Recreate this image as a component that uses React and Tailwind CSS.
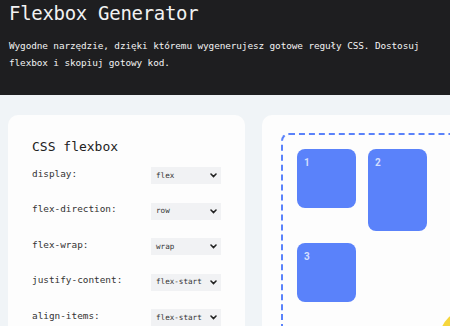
const mono = { fontFamily: '"DejaVu Sans Mono", "Liberation Mono", monospace' };

const rows = [
  { label: 'display:', value: 'flex' },
  { label: 'flex-direction:', value: 'row' },
  { label: 'flex-wrap:', value: 'wrap' },
  { label: 'justify-content:', value: 'flex-start' },
  { label: 'align-items:', value: 'flex-start' },
];

const items = [
  { n: 1, h: 'h-[59px]' },
  { n: 2, h: 'h-[82px]' },
  { n: 3, h: 'h-[59px]' },
];

function Chevron() {
  return (
    <svg width="7" height="5" viewBox="0 0 7 5" className="shrink-0">
      <path d="M1 1l2.5 2.5L6 1" fill="none" stroke="#222" strokeWidth="1.6" strokeLinecap="round" />
    </svg>
  );
}

export default function App() {
  return (
    <div className="relative w-[450px] h-[326px] overflow-hidden bg-[#f0f4f7]" style={mono}>
      <header className="bg-[#1e1e20] px-[9px] pb-[24px] text-[#f2f2f2]">
        <h1 className="text-[19px] leading-[26px] tracking-[-0.3px]">Flexbox Generator</h1>
        <p className="mt-[11px] text-[9.4px] leading-[17px] tracking-[-0.1px] w-[440px]">
          Wygodne narzędzie, dzięki któremu wygenerujesz gotowe reguły CSS. Dostosuj flexbox i skopiuj gotowy kod.
        </p>
      </header>

      <main className="flex gap-[17px] pl-[8px] pt-[20px]">
        <section className="w-[237px] shrink-0 h-[260px] rounded-[10px] bg-[#fdfdfd] p-6 pt-[23px]">
          <h2 className="text-[13px] leading-[18px] text-[#222] mb-[11px]">CSS flexbox</h2>
          <div className="flex flex-col gap-[18.5px]">
            {rows.map((r) => (
              <div key={r.label} className="flex items-center justify-between h-[17px]">
                <span className="text-[9.4px] text-[#333] -mt-[3px]">{r.label}</span>
                <div className="flex items-center justify-between w-[70px] h-[17px] bg-[#f1f2f4] pl-[5px] pr-[4px]">
                  <span className="text-[7.6px] text-[#333]">{r.value}</span>
                  <Chevron />
                </div>
              </div>
            ))}
          </div>
        </section>

        <section className="w-[237px] shrink-0 h-[260px] rounded-[10px] bg-[#fdfdfd] pl-[19px] pt-[18px]">
          <div className="w-[199px] h-[240px] rounded-[8px] border-2 border-dashed border-[#5a82fa] p-[14px]">
            <div className="flex flex-wrap items-start gap-[12px]" style={{ fontFamily: '"Roboto", "Noto Sans", sans-serif' }}>
              {items.map((it) => (
                <div key={it.n} className={`w-[59px] ${it.h} rounded-[8px] bg-[#5a82fa] px-[7px] pt-[6px] text-[10px] font-bold text-[#d4defe]`}>
                  {it.n}
                </div>
              ))}
            </div>
          </div>
        </section>
      </main>

      <div className="absolute left-[439px] top-[309px] w-[62px] h-[62px] rounded-full bg-[#f6d63c]" />
    </div>
  );
}
